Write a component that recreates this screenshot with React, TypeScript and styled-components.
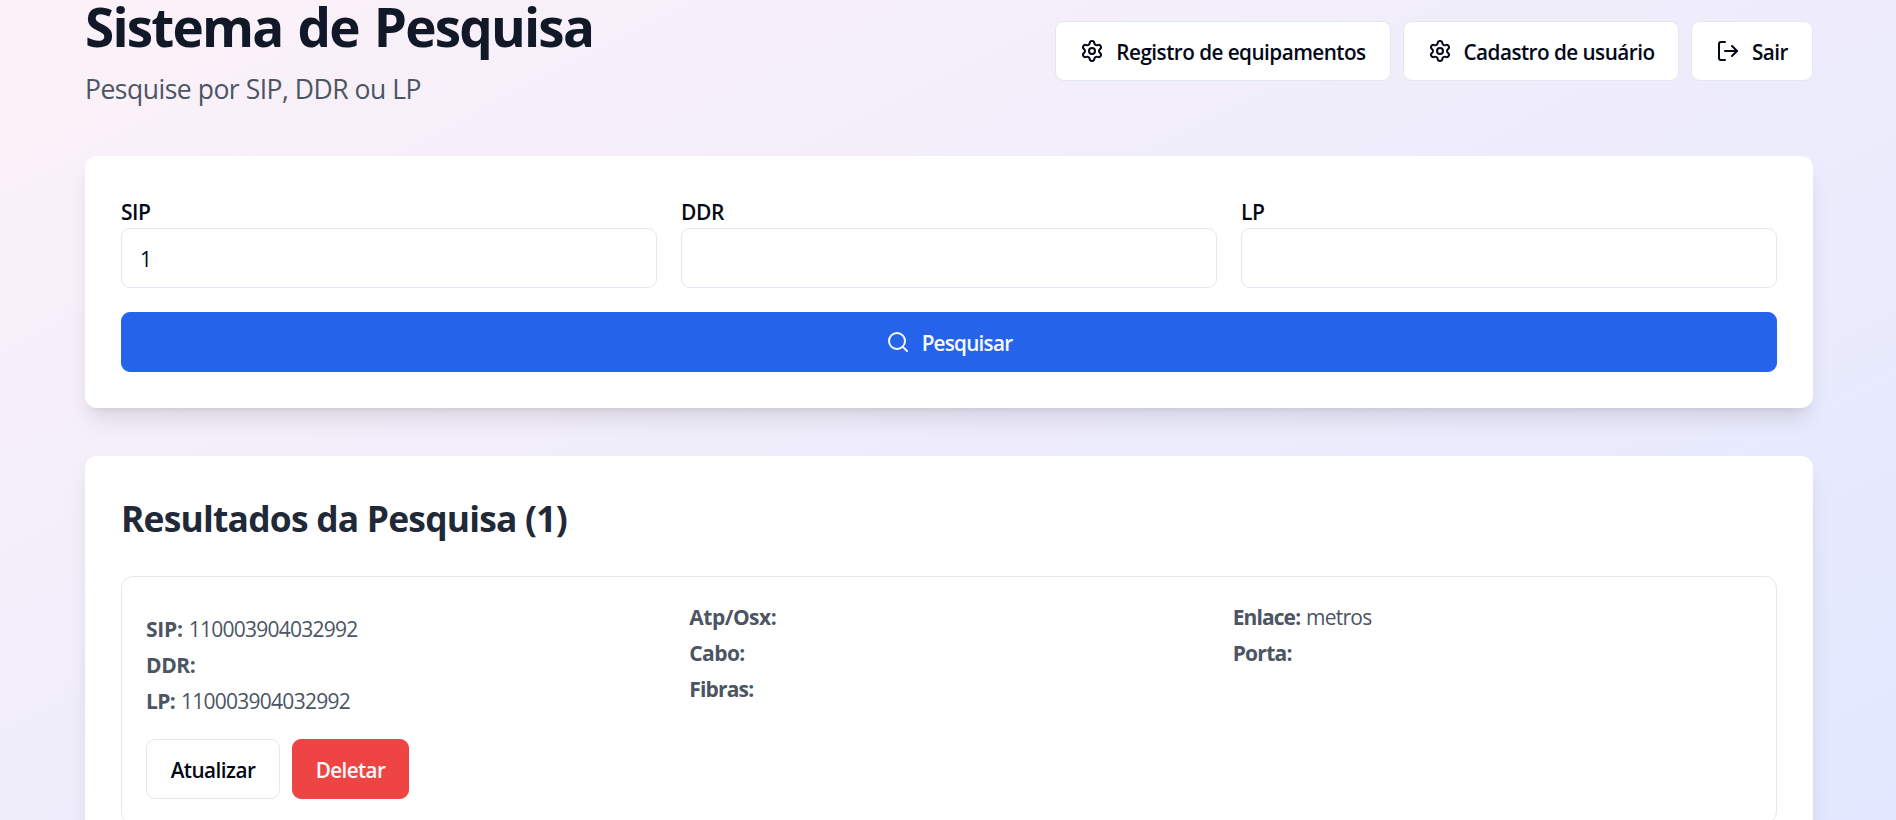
import React from "react";
import styled, { createGlobalStyle, css } from "styled-components";
import { LogOut, Search, Settings } from "lucide-react";

const GlobalStyle = createGlobalStyle`
  *, *::before, *::after { box-sizing: border-box; }
  html, body { margin: 0; padding: 0; height: 820px; overflow: hidden; }
  body { font-family: "Segoe UI", "Open Sans", "Noto Sans", sans-serif; color: #020817; }
  h1, h2, p { margin: 0; }
`;

const Page = styled.div`
  height: 820px;
  padding-left: 85px;
  background: linear-gradient(to bottom right, #fdf2f8, #e0e7ff) 0 -51px / 100% 958px no-repeat;
`;

const Container = styled.main`
  width: 1728px;
  display: flex;
  flex-direction: column;
  gap: 48px;
`;

const Header = styled.header`
  display: flex;
  justify-content: space-between;
  height: 108px;
`;

const Title = styled.h1`
  font-size: 53px;
  line-height: 54px;
  font-weight: 700;
  letter-spacing: -1.8px;
  word-spacing: 3px;
  color: #111827;
  white-space: nowrap;
`;

const Subtitle = styled.p`
  margin-top: 14px;
  font-size: 26.5px;
  line-height: 42px;
  letter-spacing: -0.48px;
  color: #4b5563;
`;

const Actions = styled.nav`
  display: flex;
  gap: 12px;
  padding-top: 21px;
`;

const Button = styled.button<{ $tone?: "outline" | "primary" | "danger"; $width?: string }>`
  display: inline-flex;
  align-items: center;
  justify-content: center;
  gap: 12px;
  width: ${(p) => p.$width ?? "auto"};
  height: 60px;
  padding: 0;
  border: 1px solid #e2e8f0;
  border-radius: 9px;
  background: #fff;
  color: #020817;
  font: 580 20.7px/30px "Segoe UI", "Open Sans", "Noto Sans", sans-serif;
  letter-spacing: -0.53px;
  white-space: nowrap;
  ${(p) => p.$tone === "primary" && css`background: #2563eb; border-color: #2563eb; color: #f8fafc; letter-spacing: -0.75px;`}
  ${(p) => p.$tone === "danger" && css`background: #ef4444; border-color: #ef4444; color: #f8fafc; letter-spacing: -0.65px;`}
  svg { flex: none; }
`;

const ButtonText = styled.span`
  padding-top: 2px;
`;

const Card = styled.section<{ $height: number }>`
  height: ${(p) => p.$height}px;
  flex: none;
  padding: 36px;
  border-radius: 12px;
  background: #fff;
  box-shadow: 0 15px 22.5px -4.5px rgba(0, 0, 0, 0.1), 0 6px 9px -6px rgba(0, 0, 0, 0.1);
`;

const Fields = styled.div`
  display: grid;
  grid-template-columns: repeat(3, 1fr);
  gap: 24px;
  margin-bottom: 24px;
`;

const Label = styled.label`
  display: flex;
  flex-direction: column;
  padding-top: 5px;
  font-size: 21px;
  line-height: 31px;
  font-weight: 580;
  letter-spacing: -0.45px;
`;

const Input = styled.input`
  height: 60px;
  width: 100%;
  padding: 2px 18px 0;
  border: 1px solid #e2e8f0;
  border-radius: 9px;
  background: #fff;
  color: #020817;
  font: 400 21px/30px "Segoe UI", "Open Sans", "Noto Sans", sans-serif;
`;

const ResultsTitle = styled.h2`
  margin: 2px 0 34px;
  font-size: 35.4px;
  line-height: 48px;
  font-weight: 700;
  letter-spacing: -0.78px;
  color: #1f2937;
`;

const Result = styled.article`
  display: grid;
  grid-template-columns: repeat(3, 1fr);
  gap: 24px;
  height: 248px;
  padding: 25px 24px 24px;
  border: 1px solid #e5e7eb;
  border-radius: 12px;
`;

const Column = styled.div<{ $offset?: number }>`
  display: flex;
  flex-direction: column;
  gap: 6px;
  padding-top: ${(p) => p.$offset ?? 0}px;
`;

const Entry = styled.p`
  font-size: 21px;
  line-height: 30px;
  letter-spacing: -0.74px;
  color: #4b5563;
`;

const EntryName = styled.strong<{ $tracking: number }>`
  margin-right: 1px;
  font-weight: 700;
  letter-spacing: ${(p) => p.$tracking}px;
`;

const RowActions = styled.div`
  display: flex;
  gap: 12px;
  margin-top: 17px;
`;

const Detail = ({ label, value, tracking = -0.4 }: { label: string; value?: string; tracking?: number }) => (
  <Entry>
    <EntryName $tracking={tracking}>{label}:</EntryName> {value}
  </Entry>
);

export default function App() {
  return (
    <Page>
      <GlobalStyle />
      <Container>
        <Header>
          <div>
            <Title>Sistema de Pesquisa</Title>
            <Subtitle>Pesquise por SIP, DDR ou LP</Subtitle>
          </div>
          <Actions>
            <Button $width="336px">
              <Settings size={24} />
              <ButtonText>Registro de equipamentos</ButtonText>
            </Button>
            <Button $width="276px">
              <Settings size={24} />
              <ButtonText>Cadastro de usuário</ButtonText>
            </Button>
            <Button $width="122px">
              <LogOut size={24} />
              <ButtonText>Sair</ButtonText>
            </Button>
          </Actions>
        </Header>

        <Card $height={252}>
          <Fields>
            <Label>
              SIP
              <Input defaultValue="1" />
            </Label>
            <Label>
              DDR
              <Input />
            </Label>
            <Label>
              LP
              <Input />
            </Label>
          </Fields>
          <Button $tone="primary" $width="100%">
            <Search size={24} />
            <ButtonText>Pesquisar</ButtonText>
          </Button>
        </Card>

        <Card $height={404}>
          <ResultsTitle>Resultados da Pesquisa (1)</ResultsTitle>
          <Result>
            <Column $offset={12}>
              <Detail label="SIP" value="110003904032992" tracking={-0.2} />
              <Detail label="DDR" />
              <Detail label="LP" value="110003904032992" tracking={-0.6} />
              <RowActions>
                <Button $width="134px">
                  <ButtonText>Atualizar</ButtonText>
                </Button>
                <Button $tone="danger" $width="117px">
                  <ButtonText>Deletar</ButtonText>
                </Button>
              </RowActions>
            </Column>
            <Column>
              <Detail label="Atp/Osx" tracking={-0.5} />
              <Detail label="Cabo" tracking={-0.6} />
              <Detail label="Fibras" tracking={-0.85} />
            </Column>
            <Column>
              <Detail label="Enlace" value="metros" tracking={-0.9} />
              <Detail label="Porta" tracking={-0.75} />
            </Column>
          </Result>
        </Card>
      </Container>
    </Page>
  );
}
